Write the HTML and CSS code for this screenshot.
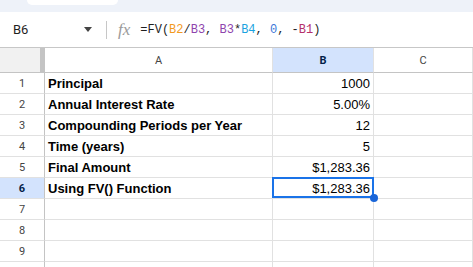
FILE: index.html
```html
<!DOCTYPE html>
<html lang="en">
<head>
  <meta charset="UTF-8">
  <title>FV Sheet</title>
  <link rel="stylesheet" href="styles.css">
</head>
<body>
  <!-- Toolbar edge -->
  <div class="toolbar">
    <div class="toolbar-pill"></div>
  </div>

  <!-- Formula bar -->
  <div class="formula-bar">
    <div class="name-box">
      <span class="cell-ref">B6</span>
      <svg class="caret" width="8" height="5" viewBox="0 0 8 5"><path d="M0 0h8L4 5z" fill="#444"/></svg>
    </div>
    <div class="divider"></div>
    <span class="fx">fx</span>
    <div class="formula">=FV(<span class="ref-1">B2</span>/<span class="ref-2">B3</span>, <span class="ref-2">B3</span>*<span class="ref-3">B4</span>, <span class="num">0</span>, -<span class="ref-4">B1</span>)</div>
  </div>

  <!-- Grid -->
  <div class="grid">
    <div class="corner"></div>
    <div class="col-head">A</div>
    <div class="col-head active">B</div>
    <div class="col-head">C</div>

    <div class="row-head">1</div>
    <div class="cell label">Principal</div>
    <div class="cell num-cell">1000</div>
    <div class="cell"></div>

    <div class="row-head">2</div>
    <div class="cell label">Annual Interest Rate</div>
    <div class="cell num-cell">5.00%</div>
    <div class="cell"></div>

    <div class="row-head">3</div>
    <div class="cell label">Compounding Periods per Year</div>
    <div class="cell num-cell">12</div>
    <div class="cell"></div>

    <div class="row-head">4</div>
    <div class="cell label">Time (years)</div>
    <div class="cell num-cell">5</div>
    <div class="cell"></div>

    <div class="row-head">5</div>
    <div class="cell label">Final Amount</div>
    <div class="cell num-cell">$1,283.36</div>
    <div class="cell"></div>

    <div class="row-head active">6</div>
    <div class="cell label">Using FV() Function</div>
    <div class="cell num-cell selected">$1,283.36<span class="handle"></span></div>
    <div class="cell"></div>

    <div class="row-head">7</div>
    <div class="cell"></div>
    <div class="cell"></div>
    <div class="cell"></div>

    <div class="row-head">8</div>
    <div class="cell"></div>
    <div class="cell"></div>
    <div class="cell"></div>

    <div class="row-head">9</div>
    <div class="cell"></div>
    <div class="cell"></div>
    <div class="cell"></div>

    <!-- row 10 is cut off by the window edge -->
    <div class="row-head"></div>
    <div class="cell"></div>
    <div class="cell"></div>
    <div class="cell"></div>
  </div>
</body>
</html>
```

FILE: styles.css
```css
body {
  margin: 0;
  padding: 0;
  background: #fff;
  font-family: "Liberation Sans", Arial, sans-serif;
  overflow: hidden;
}

.toolbar {
  height: 12px;
  background: #eef2f9;
}

.toolbar-pill {
  width: 91px;
  height: 5px;
  margin-left: 27px;
  background: #fff;
  border-radius: 0 0 8px 8px;
}

.formula-bar {
  display: flex;
  align-items: center;
  height: 35px;
  border-bottom: 1px solid #c7c7c7;
}

.name-box {
  display: flex;
  align-items: center;
  width: 106px;
  padding-left: 13px;
  box-sizing: border-box;
}

.cell-ref {
  font-family: Roboto, sans-serif;
  font-size: 13px;
  color: #1f1f1f;
  flex-grow: 1;
}

.caret {
  margin-right: 14px;
}

.divider {
  width: 1px;
  height: 18px;
  background: #c7c7c7;
}

.fx {
  font-family: "Liberation Serif", serif;
  font-style: italic;
  font-size: 17px;
  color: #9a9a9a;
  margin-left: 11px;
  margin-right: 10px;
}

.formula {
  font-family: "Liberation Mono", monospace;
  font-size: 12px;
  color: #1f1f1f;
}

.ref-1 { color: #f29a1e; }
.ref-2 { color: #8e44ad; }
.ref-3 { color: #1aa3e0; }
.ref-4 { color: #b5306a; }
.num { color: #3c78d8; }

.grid {
  display: grid;
  grid-template-columns: 45px 228px 101px 1fr;
  grid-template-rows: 25px;
  grid-auto-rows: 21px;
}

.grid > div {
  box-sizing: border-box;
  border-right: 1px solid #e1e1e1;
  border-bottom: 1px solid #e1e1e1;
}

.corner {
  background: #f1f1f1;
  border-right: 5px solid #c4c4c4 !important;
  border-bottom: 1px solid #c4c4c4 !important;
}

.col-head {
  display: flex;
  align-items: center;
  justify-content: center;
  font-family: Roboto, sans-serif;
  font-size: 11px;
  color: #444;
  background: #fff;
  border-bottom-color: #c4c4c4 !important;
}

.row-head {
  display: flex;
  align-items: center;
  justify-content: center;
  font-family: Roboto, sans-serif;
  font-size: 11px;
  color: #444;
  background: #fff;
  border-right-color: #c4c4c4 !important;
}

.col-head.active,
.row-head.active {
  background: #d3e3fd;
  color: #041e49;
  font-weight: bold;
}

.cell {
  display: flex;
  align-items: center;
  font-size: 13px;
  color: #000;
  padding: 0 3px;
  white-space: nowrap;
}

.label {
  font-weight: bold;
}

.num-cell {
  justify-content: flex-end;
}

.selected {
  position: relative;
}

.selected::after {
  content: "";
  position: absolute;
  top: -1px;
  left: -1px;
  right: -1px;
  bottom: 0;
  border: 2px solid #1a73e8;
}

.handle {
  position: absolute;
  right: -5px;
  bottom: -4px;
  width: 8px;
  height: 8px;
  border-radius: 50%;
  background: #1a66d9;
  z-index: 2;
}
```
